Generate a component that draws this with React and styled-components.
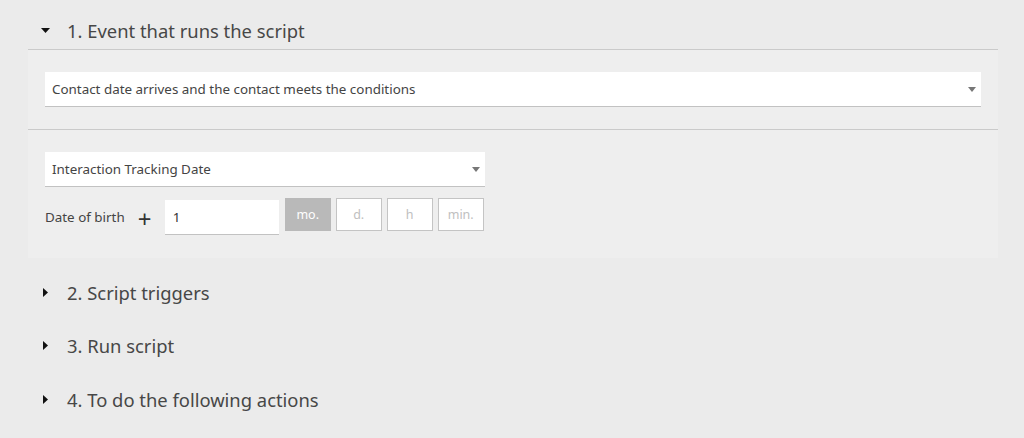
import React, { useState } from 'react';
import styled, { createGlobalStyle } from 'styled-components';

const GlobalStyle = createGlobalStyle`
  body {
    margin: 0;
    background: #ebebeb;
    font-family: "Segoe UI", "Noto Sans", "Open Sans", sans-serif;
    color: #444;
  }
`;

const Page = styled.div`
  width: 1024px;
  height: 438px;
  padding: 11px 26px 0 28px;
  box-sizing: border-box;
  overflow: hidden;
`;

const Header = styled.div`
  display: flex;
  align-items: center;
  height: ${(p) => (p.$open ? '39px' : '38px')};
  margin-top: ${(p) => (p.$first ? '0' : p.$gap || '15px')};
  border-bottom: ${(p) => (p.$open ? '1px solid #cacaca' : 'none')};
  box-sizing: border-box;
  cursor: pointer;
  font-size: 18.4px;
  color: #474747;
`;

const Caret = styled.span`
  width: 39px;
  display: flex;
  padding-left: ${(p) => (p.$open ? '13px' : '15px')};
  box-sizing: border-box;
  svg {
    display: block;
  }
`;

const Panel = styled.div`
  background: #eeeeee;
`;

const Block = styled.div`
  padding: 22px 17px;
  border-bottom: ${(p) => (p.$divider ? '1px solid #cacaca' : 'none')};
  display: flex;
  flex-direction: column;
  gap: 11px;
`;

const Select = styled.div`
  width: ${(p) => p.$width || '100%'};
  height: 35px;
  background: #fff;
  border-bottom: 1px solid #c2c2c2;
  box-sizing: border-box;
  display: flex;
  align-items: center;
  justify-content: space-between;
  padding: 0 7px;
  font-size: 13.4px;
  color: #444;
`;

const SelectArrow = styled.span`
  width: 0;
  height: 0;
  border-left: 4px solid transparent;
  border-right: 4px solid transparent;
  border-top: 5px solid #777;
  margin-right: -2px;
`;

const OffsetRow = styled.div`
  display: flex;
  align-items: flex-start;
  font-size: 13.4px;
  color: #444;
`;

const Label = styled.span`
  margin-top: 2px;
  line-height: 35px;
`;

const Plus = styled.span`
  font-size: 24px;
  color: #333;
  width: 40px;
  text-align: center;
  margin-top: 3px;
  line-height: 35px;
`;

const NumberInput = styled.input`
  width: 114px;
  height: 35px;
  box-sizing: border-box;
  border: none;
  border-bottom: 1px solid #c2c2c2;
  background: #fff;
  padding: 0 8px;
  font: inherit;
  font-size: 13.4px;
  color: #333;
  outline: none;
  margin-top: 2px;
`;

const Units = styled.div`
  display: flex;
  gap: 5px;
  margin-left: 6px;
`;

const Unit = styled.button`
  width: 46px;
  height: 33px;
  box-sizing: border-box;
  border: 1px solid ${(p) => (p.$active ? '#b9b9b9' : '#c4c4c4')};
  background: ${(p) => (p.$active ? '#b9b9b9' : '#fff')};
  color: ${(p) => (p.$active ? '#fff' : '#c0c0c0')};
  font-family: inherit;
  font-size: 12.5px;
  padding: 0;
  cursor: pointer;
`;

const DownCaret = () => (
  <svg width="9" height="5" viewBox="0 0 9 5">
    <path d="M0 0h9L4.5 5z" fill="#111" />
  </svg>
);

const RightCaret = () => (
  <svg width="5" height="9" viewBox="0 0 5 9">
    <path d="M0 0v9l5-4.5z" fill="#111" />
  </svg>
);

const sections = [
  { title: '2. Script triggers', gap: '15px' },
  { title: '3. Run script', gap: '15px' },
  { title: '4. To do the following actions', gap: '16px' },
];

export default function App() {
  const [amount, setAmount] = useState('1');
  const [unit, setUnit] = useState('mo.');

  return (
    <>
      <GlobalStyle />
      <Page>
        <Header $first $open>
          <Caret $open>
            <DownCaret />
          </Caret>
          1. Event that runs the script
        </Header>
        <Panel>
          <Block $divider>
            <Select>
              Contact date arrives and the contact meets the conditions
              <SelectArrow />
            </Select>
          </Block>
          <Block>
            <Select $width="440px">
              Interaction Tracking Date
              <SelectArrow />
            </Select>
            <OffsetRow>
              <Label>Date of birth</Label>
              <Plus>+</Plus>
              <NumberInput value={amount} onChange={(e) => setAmount(e.target.value)} />
              <Units>
                {['mo.', 'd.', 'h', 'min.'].map((u) => (
                  <Unit key={u} $active={unit === u} onClick={() => setUnit(u)}>
                    {u}
                  </Unit>
                ))}
              </Units>
            </OffsetRow>
          </Block>
        </Panel>
        {sections.map((s) => (
          <Header key={s.title} $gap={s.gap}>
            <Caret>
              <RightCaret />
            </Caret>
            {s.title}
          </Header>
        ))}
      </Page>
    </>
  );
}
